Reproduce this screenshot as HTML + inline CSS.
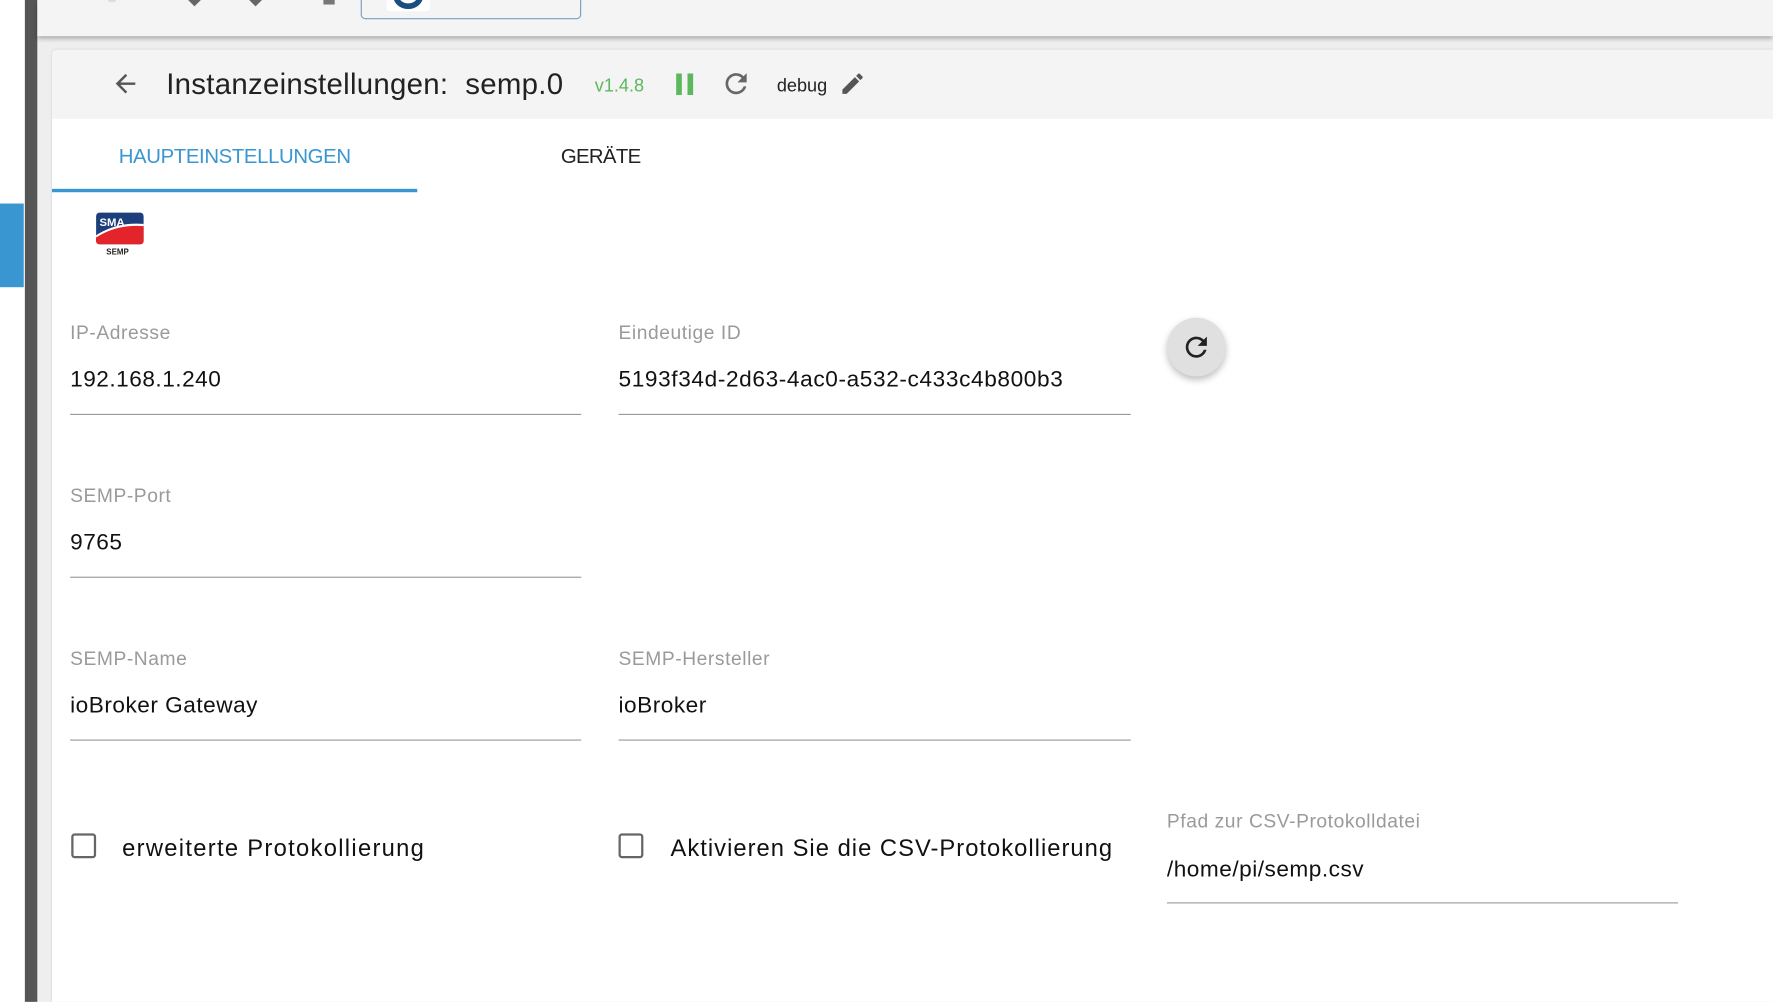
<!DOCTYPE html>
<html><head><meta charset="utf-8"><style>
html,body{margin:0;padding:0;width:1773px;height:1002px;overflow:hidden;background:#fff;font-family:"Liberation Sans",sans-serif;}
#w{position:absolute;left:0;top:0;width:1568px;height:886px;transform:scale(1.13074);transform-origin:0 0;background:#eee;}
.a{position:absolute;}
.lbl{position:absolute;font-size:17px;color:#9a9a9a;letter-spacing:0.5px;}
.val{position:absolute;font-size:20px;color:#111;letter-spacing:0.45px;}
.ln{position:absolute;height:1px;background:#999;}
.cb{position:absolute;width:22px;height:22px;border:2px solid #666;border-radius:3px;box-sizing:border-box;}
</style></head><body><div id="w">
<div class="a" style="left:0;top:0;width:22px;height:886px;background:#fff"></div>
<div class="a" style="left:0;top:180px;width:21px;height:74px;background:#3a96d0"></div>
<div class="a" style="left:22px;top:0;width:11px;height:886px;background:#555"></div>
<div class="a" style="left:33px;top:0;width:1535px;height:32px;background:#f4f4f4;box-shadow:0 2px 4px rgba(0,0,0,.3)"></div>
<div class="a" style="left:95px;top:-4px;width:8px;height:6px;background:#ddd;border-radius:3px"></div>
<div class="a" style="left:168px;top:-4px;width:8px;height:8px;background:#666;transform:rotate(45deg)"></div>
<div class="a" style="left:222px;top:-4px;width:8px;height:8px;background:#666;transform:rotate(45deg)"></div>
<div class="a" style="left:286px;top:-2px;width:10px;height:6px;background:#777"></div>
<div class="a" style="left:319px;top:-8px;width:193px;height:23px;border:1px solid #7a9cc0;border-radius:4px"></div>
<div class="a" style="left:342px;top:-12px;width:38px;height:22px;background:#fff;border-radius:3px"></div>
<div class="a" style="left:348px;top:-14px;width:26px;height:22px;border:5px solid #1a4d80;border-radius:50%;box-sizing:border-box"></div>
<div class="a" style="left:46px;top:44px;width:1522px;height:842px;background:#fff;border-radius:4px 0 0 0;box-shadow:0 0 2px rgba(0,0,0,.15)"></div>
<div class="a" style="left:46px;top:44px;width:1522px;height:61px;background:#f4f4f4;border-radius:4px 0 0 0"></div>
<svg class="a" style="left:97px;top:61px" width="28" height="26" viewBox="0 0 24 24"><path d="M20 11H7.8l5.6-5.6L12 4l-8 8 8 8 1.4-1.4L7.8 13H20z" fill="#555"/></svg>
<div class="a" style="left:147px;top:59px;font-size:26px;color:#222;letter-spacing:0.25px">Instanzeinstellungen:&nbsp; semp.0</div>
<div class="a" style="left:526px;top:68px;font-size:16px;color:#5cb85c">v1.4.8</div>
<div class="a" style="left:598px;top:65px;width:5px;height:19px;background:#5cb85c"></div>
<div class="a" style="left:608px;top:65px;width:5px;height:19px;background:#5cb85c"></div>
<svg class="a" style="left:637px;top:60px" width="28" height="28" viewBox="0 0 24 24"><path d="M17.65 6.35A7.96 7.96 0 0 0 12 4a8 8 0 1 0 7.73 10h-2.08A6 6 0 1 1 12 6c1.66 0 3.14.69 4.22 1.78L13 11h7V4z" fill="#666"/></svg>
<div class="a" style="left:687px;top:68px;font-size:16px;color:#222">debug</div>
<svg class="a" style="left:742px;top:62px" width="24" height="24" viewBox="0 0 24 24"><path d="M3 17.25V21h3.75L17.81 9.94l-3.75-3.75zM20.71 7.04a1 1 0 0 0 0-1.41l-2.34-2.34a1 1 0 0 0-1.41 0l-1.83 1.83 3.75 3.75z" fill="#555"/></svg>
<div class="a" style="left:105px;top:128px;font-size:18px;color:#3a96d0;letter-spacing:-0.33px">HAUPTEINSTELLUNGEN</div>
<div class="a" style="left:496px;top:128px;font-size:18px;color:#222;letter-spacing:-0.6px">GERÄTE</div>
<div class="a" style="left:46px;top:167px;width:323px;height:3px;background:#3a96d0"></div>
<svg class="a" style="left:84px;top:187px" width="44" height="30" viewBox="0 0 44 30"><rect x="1" y="1" width="42" height="28" rx="3" fill="#1c3f7c"/><path d="M1 22 Q20 10 43 12 V26 Q43 29 40 29 H4 Q1 29 1 26z" fill="#e3242b"/><path d="M1 21 Q20 9 43 11 V13 Q20 11 1 23z" fill="#fff"/><text x="4" y="13" font-family="Liberation Sans" font-weight="bold" font-size="10" fill="#fff">SMA</text></svg>
<div class="a" style="left:94px;top:220px;font-size:7px;font-weight:bold;color:#222">SEMP</div>

<div class="lbl" style="left:62px;top:285px">IP-Adresse</div>
<div class="val" style="left:62px;top:325px">192.168.1.240</div>
<div class="ln" style="left:62px;top:366px;width:452px"></div>
<div class="lbl" style="left:547px;top:285px">Eindeutige ID</div>
<div class="val" style="left:547px;top:325px;letter-spacing:0.55px">5193f34d-2d63-4ac0-a532-c433c4b800b3</div>
<div class="ln" style="left:547px;top:366px;width:453px"></div>
<div class="a" style="left:1032px;top:281px;width:52px;height:52px;border-radius:50%;background:#e0e0e0;box-shadow:0 3px 6px rgba(0,0,0,.25)"></div>
<svg class="a" style="left:1044px;top:293px" width="28" height="28" viewBox="0 0 24 24"><path d="M17.65 6.35A7.96 7.96 0 0 0 12 4a8 8 0 1 0 7.73 10h-2.08A6 6 0 1 1 12 6c1.66 0 3.14.69 4.22 1.78L13 11h7V4z" fill="#222"/></svg>

<div class="lbl" style="left:62px;top:429px">SEMP-Port</div>
<div class="val" style="left:62px;top:469px">9765</div>
<div class="ln" style="left:62px;top:510px;width:452px"></div>

<div class="lbl" style="left:62px;top:573px">SEMP-Name</div>
<div class="val" style="left:62px;top:613px">ioBroker Gateway</div>
<div class="ln" style="left:62px;top:654px;width:452px"></div>
<div class="lbl" style="left:547px;top:573px">SEMP-Hersteller</div>
<div class="val" style="left:547px;top:613px">ioBroker</div>
<div class="ln" style="left:547px;top:654px;width:453px"></div>

<div class="cb" style="left:63px;top:737px"></div>
<div class="val" style="left:108px;top:739px;font-size:21px;letter-spacing:1.15px">erweiterte Protokollierung</div>
<div class="cb" style="left:547px;top:737px"></div>
<div class="val" style="left:593px;top:739px;font-size:21px;letter-spacing:0.9px">Aktivieren Sie die CSV-Protokollierung</div>
<div class="lbl" style="left:1032px;top:717px">Pfad zur CSV-Protokolldatei</div>
<div class="val" style="left:1032px;top:758px">/home/pi/semp.csv</div>
<div class="ln" style="left:1032px;top:798px;width:452px"></div>
</div></body></html>
